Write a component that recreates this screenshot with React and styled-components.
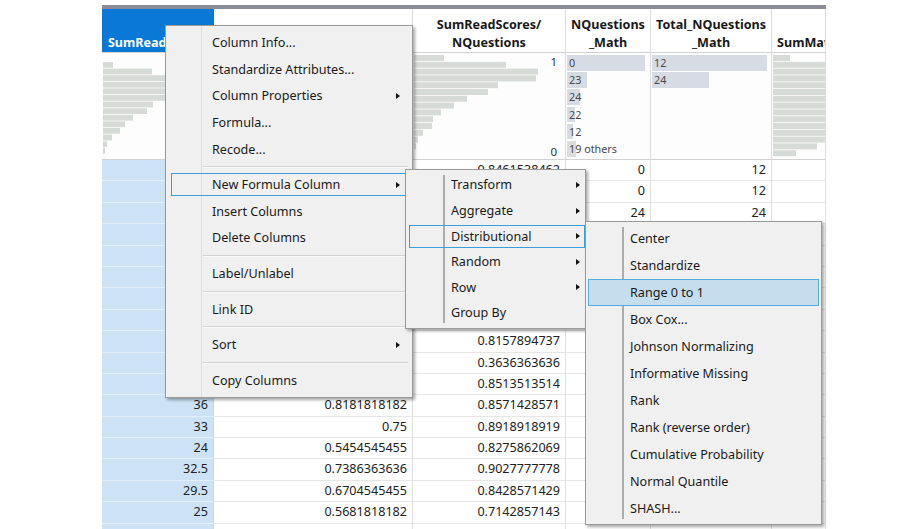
import React from 'react';
import styled, { createGlobalStyle } from 'styled-components';

const Global = createGlobalStyle`
  html, body { margin: 0; padding: 0; background: #fff; }
  body { font-family: 'Noto Sans', 'Open Sans', sans-serif; }
`;

const Page = styled.div`
  position: relative;
  width: 922px;
  height: 529px;
  overflow: hidden;
  background: #fff;
  padding-top: 5px;
  box-sizing: border-box;
`;

const Grid = styled.div`
  margin-left: 102px;
  width: 724px;
  border-top: 4px solid #8c8c98;
  display: grid;
  grid-template-columns: 112px 199px 153px 85px 121px 54px;
  grid-template-rows: 44px 107px;
  grid-auto-rows: 21.4px;
`;

const HeadCell = styled.div`
  box-sizing: border-box;
  border-right: 1px solid ${p => (p.$sel ? '#0a78d6' : '#dcdcdc')};
  border-bottom: 1px solid #d2d2d2;
  background: ${p => (p.$sel ? '#0a78d6' : '#fff')};
  color: ${p => (p.$sel ? '#fff' : '#1a1a1a')};
  font-weight: 700;
  font-size: 12.6px;
  line-height: 18px;
  display: flex;
  flex-direction: column;
  justify-content: flex-end;
  overflow: hidden;
  padding: 0 5px;
`;

const HeadLine = styled.div`
  text-align: center;
  white-space: nowrap;
`;

const HistCell = styled.div`
  box-sizing: border-box;
  border-right: 1px solid #dcdcdc;
  border-bottom: 1px solid #d2d2d2;
  background: #fdfdfd;
  overflow: hidden;
`;

const Cell = styled.div`
  box-sizing: border-box;
  border-right: 1px solid ${p => (p.$sel ? '#bcd6ec' : '#dedede')};
  border-bottom: 1px solid ${p => (p.$sel ? '#e2eef9' : '#e6e6e6')};
  background: ${p => (p.$sel ? '#cde3f5' : '#fff')};
  font-size: 12.6px;
  color: #222;
  text-align: right;
  padding-right: 5px;
  line-height: 20.4px;
  white-space: nowrap;
  overflow: hidden;
`;

const CatList = styled.div`
  display: flex;
  flex-direction: column;
  gap: 1.6px;
  padding: 2px 0 0 1px;
`;

const CatRow = styled.div`
  display: grid;
  height: 15.6px;
`;

const CatBar = styled.div`
  grid-area: 1 / 1;
  height: 100%;
  background: ${p => (p.$other ? '#dcdcdc' : '#d6dbe4')};
`;

const CatLabel = styled.span`
  grid-area: 1 / 1;
  font-size: 10.8px;
  line-height: 15.6px;
  color: #4a4a4a;
  padding-left: 2px;
  white-space: nowrap;
`;

const MenuBox = styled.div`
  position: absolute;
  left: ${p => p.$x}px;
  top: ${p => p.$y}px;
  width: ${p => p.$w}px;
  box-sizing: border-box;
  display: flex;
  flex-direction: column;
  background: #f0f0f0;
  border: 1px solid #9a9a9a;
  box-shadow: 2px 2px 3px rgba(0, 0, 0, 0.35);
  padding: ${p => p.$pad}px 0;
  font-size: 12.6px;
  color: #1a1a1a;
  &::before {
    content: '';
    position: absolute;
    left: ${p => p.$gx}px;
    top: ${p => p.$gi}px;
    bottom: ${p => p.$gi}px;
    width: ${p => p.$gw}px;
    background: ${p => p.$gc};
  }
`;

const Item = styled.div`
  position: relative;
  box-sizing: border-box;
  flex: none;
  height: ${p => p.$h}px;
  margin: ${p => p.$m}px ${p => p.$r}px ${p => p.$m}px ${p => p.$l}px;
  padding: 0 ${p => p.$pr}px 0 ${p => p.$pl}px;
  display: flex;
  align-items: center;
  justify-content: space-between;
  white-space: nowrap;
  border: 1px solid ${p => (p.$state ? (p.$state === 'hover' ? '#56acdf' : '#3c9edb') : 'transparent')};
  background: ${p => (p.$state === 'hover' ? '#c4deed' : 'transparent')};
`;

const Arrow = styled.span`
  width: 0;
  height: 0;
  border-left: 4px solid #111;
  border-top: 3.5px solid transparent;
  border-bottom: 3.5px solid transparent;
`;

const Sep = styled.div`
  flex: none;
  height: 9px;
  margin: 0 4px 0 37px;
  background: linear-gradient(
    transparent 4px,
    #d2d2d2 4px,
    #d2d2d2 5px,
    #fafafa 5px,
    #fafafa 6px,
    transparent 6px
  );
`;

function Menu({ cfg, items }) {
  return (
    <MenuBox
      $x={cfg.x}
      $y={cfg.y}
      $w={cfg.w}
      $pad={cfg.pad}
      $gx={cfg.gx}
      $gi={cfg.gi}
      $gw={cfg.gw}
      $gc={cfg.gc}
    >
      {items.map((it, i) =>
        it === '-' ? (
          <Sep key={i} />
        ) : (
          <Item
            key={i}
            $h={cfg.h}
            $m={cfg.m}
            $l={cfg.l}
            $r={cfg.r}
            $pl={cfg.pl}
            $pr={cfg.pr}
            $state={it.state}
          >
            <span>{it.label}</span>
            {it.sub && <Arrow />}
          </Item>
        )
      )}
    </MenuBox>
  );
}

function Hist({ w, h, top, step, bars, labels }) {
  return (
    <svg width={w} height={h} style={{ display: 'block' }}>
      {bars.map((bw, i) => (
        <rect key={i} x={1} y={top + i * step} width={bw} height={step - 0.8} fill="#d7dbd7" />
      ))}
      {labels &&
        labels.map((l, i) => (
          <text key={i} x={l.x} y={l.y} fontSize="11.5" fill="#333" textAnchor="end" fontFamily="Noto Sans, sans-serif">
            {l.t}
          </text>
        ))}
    </svg>
  );
}

function CatHist({ rows }) {
  return (
    <CatList>
      {rows.map((r, i) => (
        <CatRow key={i}>
          <CatBar $other={r.other} style={{ width: r.w + 'px' }} />
          <CatLabel>{r.t}</CatLabel>
        </CatRow>
      ))}
    </CatList>
  );
}

const col1 = [22, 24, 33, 30, 28.5, 35, 31, 27, 31, 12, 31.5, 36, 33, 24, 32.5, 29.5, 25, 30];
const col3 = [
  '0.8461538462', '0.9230769231', '0.7727272727', '0.8108108108', '0.6842105263', '0.8823529412',
  '0.7631578947', '0.7941176471', '0.8157894737', '0.3636363636', '0.8513513514', '0.8571428571',
  '0.8918918919', '0.8275862069', '0.9027777778', '0.8428571429', '0.7142857143', '0.8108108108',
];
const col2Fixed = {
  11: '0.8181818182',
  12: '0.75',
  13: '0.5454545455',
  14: '0.7386363636',
  15: '0.6704545455',
  16: '0.5681818182',
};
const col4 = [0, 0, 24, 23, 24, 0, 22, 23, 24, 12, 0, 23, 24, 0, 22, 24, 23, 0];
const col5 = [12, 12, 24, 24, 24, 12, 24, 24, 24, 12, 12, 24, 24, 12, 24, 24, 24, 12];

function fmt(v) {
  const s = (v / 44).toFixed(10);
  return s.replace(/0+$/, '').replace(/\.$/, '');
}

const mainItems = [
  { label: 'Column Info...' },
  { label: 'Standardize Attributes...' },
  { label: 'Column Properties', sub: true },
  { label: 'Formula...' },
  { label: 'Recode...' },
  '-',
  { label: 'New Formula Column', sub: true, state: 'open' },
  { label: 'Insert Columns' },
  { label: 'Delete Columns' },
  '-',
  { label: 'Label/Unlabel' },
  '-',
  { label: 'Link ID' },
  '-',
  { label: 'Sort', sub: true },
  '-',
  { label: 'Copy Columns' },
];

const subItems = [
  { label: 'Transform', sub: true },
  { label: 'Aggregate', sub: true },
  { label: 'Distributional', sub: true, state: 'open' },
  { label: 'Random', sub: true },
  { label: 'Row', sub: true },
  { label: 'Group By' },
];

const distItems = [
  { label: 'Center' },
  { label: 'Standardize' },
  { label: 'Range 0 to 1', state: 'hover' },
  { label: 'Box Cox...' },
  { label: 'Johnson Normalizing' },
  { label: 'Informative Missing' },
  { label: 'Rank' },
  { label: 'Rank (reverse order)' },
  { label: 'Cumulative Probability' },
  { label: 'Normal Quantile' },
  { label: 'SHASH...' },
];

const mainCfg = { x: 165, y: 25, w: 248, pad: 3.5, h: 23, m: 1.8, l: 5, r: 4, pl: 40, pr: 7, gx: 35, gi: 0, gw: 1, gc: '#dedede' };
const subCfg = { x: 405, y: 169, w: 181, pad: 2.2, h: 23, m: 1.3, l: 3, r: 0, pl: 41, pr: 4, gx: 37, gi: 5, gw: 2, gc: '#ababab' };
const distCfg = { x: 585, y: 221, w: 237, pad: 2.5, h: 27, m: 0, l: 2, r: 2, pl: 41, pr: 4, gx: 36, gi: 5, gw: 2, gc: '#ababab' };

export default function App() {
  return (
    <>
      <Global />
      <Page>
        <Grid>
          <HeadCell $sel>
            <HeadLine>SumReadScores</HeadLine>
          </HeadCell>
          <HeadCell>
            <HeadLine>ReadPct</HeadLine>
          </HeadCell>
          <HeadCell>
            <HeadLine>SumReadScores/</HeadLine>
            <HeadLine>NQuestions</HeadLine>
          </HeadCell>
          <HeadCell>
            <HeadLine>NQuestions</HeadLine>
            <HeadLine>_Math</HeadLine>
          </HeadCell>
          <HeadCell>
            <HeadLine>Total_NQuestions</HeadLine>
            <HeadLine>_Math</HeadLine>
          </HeadCell>
          <HeadCell>
            <HeadLine>SumMathScores</HeadLine>
          </HeadCell>

          <HistCell>
            <Hist w={111} h={106} top={9} step={6.6} bars={[10, 49, 75, 85, 85, 80, 50, 44, 30, 22, 17, 9, 4, 2]} />
          </HistCell>
          <HistCell>
            <Hist w={198} h={106} top={4} step={6.8} bars={[20, 60, 110, 150, 160, 130, 100, 80, 55, 40, 25, 15, 8, 4]} />
          </HistCell>
          <HistCell>
            <Hist
              w={152}
              h={106}
              top={2}
              step={6.8}
              bars={[30, 92, 124, 122, 84, 74, 53, 40, 27, 19, 18, 9, 4, 2]}
              labels={[
                { t: '1', x: 144, y: 13 },
                { t: '0', x: 144, y: 103 },
              ]}
            />
          </HistCell>
          <HistCell>
            <CatHist
              rows={[
                { t: '0', w: 78 },
                { t: '23', w: 20 },
                { t: '24', w: 13 },
                { t: '22', w: 8 },
                { t: '12', w: 6 },
                { t: '19 others', w: 9, other: true },
              ]}
            />
          </HistCell>
          <HistCell>
            <CatHist
              rows={[
                { t: '12', w: 115 },
                { t: '24', w: 57 },
              ]}
            />
          </HistCell>
          <HistCell>
            <Hist w={53} h={106} top={2} step={6.8} bars={[17, 60, 60, 60, 60, 60, 60, 60, 60, 60, 60, 60, 60, 44, 23]} />
          </HistCell>

          {col1.map((v, i) => (
            <React.Fragment key={i}>
              <Cell $sel>{v}</Cell>
              <Cell>{col2Fixed[i] || fmt(v)}</Cell>
              <Cell>{col3[i]}</Cell>
              <Cell>{col4[i]}</Cell>
              <Cell>{col5[i]}</Cell>
              <Cell />
            </React.Fragment>
          ))}
        </Grid>

        <Menu cfg={mainCfg} items={mainItems} />
        <Menu cfg={subCfg} items={subItems} />
        <Menu cfg={distCfg} items={distItems} />
      </Page>
    </>
  );
}
